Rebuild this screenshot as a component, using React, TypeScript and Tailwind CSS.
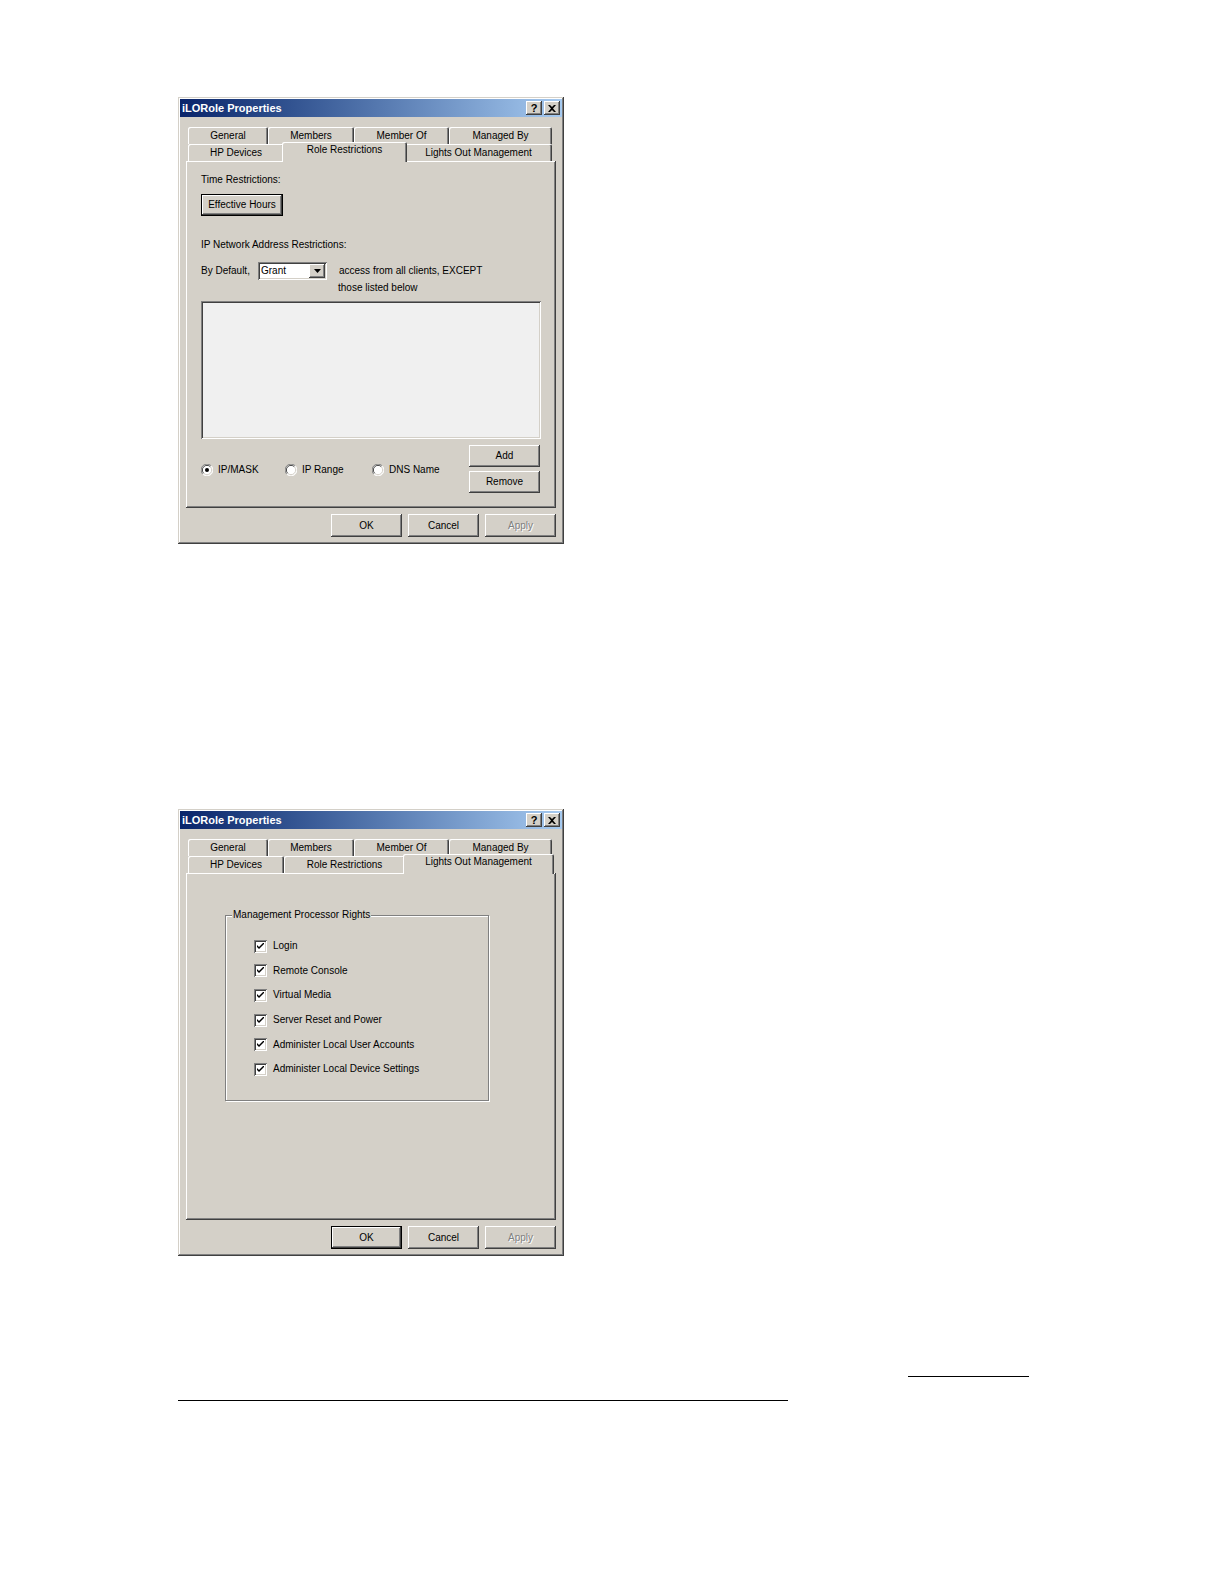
const FACE = "bg-[#d4d0c8]";
const RAISED =
  "shadow-[inset_-1px_-1px_#404040,inset_1px_1px_#ffffff,inset_-2px_-2px_#808080,inset_2px_2px_#d4d0c8]";
const SUNKEN =
  "shadow-[inset_1px_1px_#808080,inset_-1px_-1px_#ffffff,inset_2px_2px_#404040,inset_-2px_-2px_#d4d0c8]";
const FONT = "font-['Liberation_Sans',Arial,sans-serif] text-[10px] leading-[12px] text-black";

function Button({
  label,
  w = 71,
  h = 23,
  isDefault = false,
  disabled = false,
}: {
  label: string;
  w?: number;
  h?: number;
  isDefault?: boolean;
  disabled?: boolean;
}) {
  return (
    <div
      className={`${FACE} flex items-center justify-center ${isDefault ? "border border-black" : ""}`}
      style={{ width: w, height: h }}
    >
      <div className={`${RAISED} flex h-full w-full items-center justify-center`}>
        <span className={disabled ? "text-[#808080] [text-shadow:1px_1px_#ffffff]" : ""}>{label}</span>
      </div>
    </div>
  );
}

function Tab({ label, w, selected = false }: { label: string; w: number; selected?: boolean }) {
  return (
    <div
      className={`${FACE} flex shrink-0 items-start justify-center rounded-t-[2px] shadow-[inset_1px_1px_#ffffff,inset_-1px_0_#404040,inset_-2px_0_#808080] ${
        selected ? "relative z-10 -mx-[2px] -mb-[1px] h-[20px] pt-[2px]" : "h-[17px] pt-[3px]"
      }`}
      style={{ width: selected ? w + 4 : w }}
    >
      {label}
    </div>
  );
}

function Radio({ label, checked = false }: { label: string; checked?: boolean }) {
  return (
    <div className="flex items-center gap-[5px]">
      <svg width="12" height="12" viewBox="0 0 12 12">
        <circle cx="6" cy="6" r="5.5" fill="#ffffff" />
        <path d="M10.2 1.8 A5.5 5.5 0 0 0 1.8 10.2" fill="none" stroke="#808080" strokeWidth="1" />
        <path d="M9.3 2.7 A4.5 4.5 0 0 0 2.7 9.3" fill="none" stroke="#404040" strokeWidth="1" />
        <path d="M1.8 10.2 A5.5 5.5 0 0 0 10.2 1.8" fill="none" stroke="#ffffff" strokeWidth="1" />
        <path d="M2.7 9.3 A4.5 4.5 0 0 0 9.3 2.7" fill="none" stroke="#d4d0c8" strokeWidth="1" />
        {checked && <circle cx="6" cy="6" r="2" fill="#000000" />}
      </svg>
      <span>{label}</span>
    </div>
  );
}

function Checkbox({ label }: { label: string }) {
  return (
    <div className="flex h-[24.6px] items-center gap-[6px]">
      <div
        className={`flex h-[13px] w-[13px] items-center justify-center bg-white shadow-[inset_1px_1px_#808080,inset_-1px_-1px_#ffffff,inset_2px_2px_#404040,inset_-2px_-2px_#d4d0c8]`}
      >
        <svg width="7" height="7" viewBox="0 0 7 7">
          <path d="M0 2 L2 4 L7 -1 L7 1 L2 6 L0 4 Z" fill="#000000" />
        </svg>
      </div>
      <span>{label}</span>
    </div>
  );
}

function TitleBar() {
  return (
    <div className="flex h-[18px] items-center justify-between bg-gradient-to-r from-[#0a246a] to-[#a6caf0] pl-[2px] pr-[2px]">
      <span className="text-[11px] font-bold leading-[12px] text-white">iLORole Properties</span>
      <div className="flex items-center gap-[2px]">
        <div className={`${FACE} ${RAISED} flex h-[14px] w-[16px] items-center justify-center text-[11px] font-bold leading-none`}>
          ?
        </div>
        <div className={`${FACE} ${RAISED} flex h-[14px] w-[16px] items-center justify-center`}>
          <svg width="8" height="7" viewBox="0 0 8 7">
            <path d="M0 0 L2 0 L4 2 L6 0 L8 0 L5 3.5 L8 7 L6 7 L4 5 L2 7 L0 7 L3 3.5 Z" fill="#000000" />
          </svg>
        </div>
      </div>
    </div>
  );
}

function Dialog({ selected, children, okDefault }: { selected: string; children: React.ReactNode; okDefault: boolean }) {
  const row1 = [
    ["General", 80],
    ["Members", 86],
    ["Member Of", 95],
    ["Managed By", 103],
  ] as const;
  const row2 = [
    ["HP Devices", 96],
    ["Role Restrictions", 121],
    ["Lights Out Management", 147],
  ] as const;
  return (
    <div
      className={`${FACE} h-[447px] w-[386px] p-[2px] shadow-[inset_-1px_-1px_#404040,inset_1px_1px_#d4d0c8,inset_-2px_-2px_#808080,inset_2px_2px_#ffffff] ${FONT}`}
    >
      <TitleBar />
      <div className="mt-[10px] flex h-[17px] items-end pl-[8px]">
        {row1.map(([l, w]) => (
          <Tab key={l} label={l} w={w} />
        ))}
      </div>
      <div className="flex h-[17px] items-end pl-[8px]">
        {row2.map(([l, w]) => (
          <Tab key={l} label={l} w={w} selected={l === selected} />
        ))}
      </div>
      <div className={`ml-[6px] h-[347px] w-[370px] ${RAISED}`}>{children}</div>
      <div className="mt-[6px] flex justify-end gap-[6px] pr-[6px]">
        <Button label="OK" isDefault={okDefault} />
        <Button label="Cancel" />
        <Button label="Apply" disabled />
      </div>
    </div>
  );
}

function RoleRestrictions() {
  return (
    <div className="flex flex-col pl-[15px] pt-[13px]">
      <div>Time Restrictions:</div>
      <div className="mt-[8px]">
        <Button label="Effective Hours" w={82} h={22} isDefault />
      </div>
      <div className="mt-[23px]">IP Network Address Restrictions:</div>
      <div className="mt-[11px] flex h-[18px] items-center">
        <span className="w-[57px]">By Default,</span>
        <div className={`flex h-[18px] w-[69px] items-center justify-between bg-white pl-[3px] pr-[2px] ${SUNKEN}`}>
          <span>Grant</span>
          <div className={`${FACE} ${RAISED} flex h-[14px] w-[16px] items-center justify-center`}>
            <svg width="7" height="4" viewBox="0 0 7 4">
              <path d="M0 0 L7 0 L3.5 4 Z" fill="#000000" />
            </svg>
          </div>
        </div>
        <span className="ml-[12px]">access from all clients, EXCEPT</span>
      </div>
      <div className="ml-[137px] mt-[2px]">those listed below</div>
      <div className={`mt-[7px] h-[138px] w-[340px] bg-[#f0f0f0] ${SUNKEN}`} />
      <div className="mt-[6px] flex w-[340px] items-center justify-between pr-[1px]">
        <div className="flex items-center pt-[1px]">
          <div className="w-[84px]">
            <Radio label="IP/MASK" checked />
          </div>
          <div className="w-[87px]">
            <Radio label="IP Range" />
          </div>
          <Radio label="DNS Name" />
        </div>
        <div className="flex flex-col gap-[4px]">
          <Button label="Add" w={71} h={22} />
          <Button label="Remove" w={71} h={22} />
        </div>
      </div>
    </div>
  );
}

function LightsOut() {
  const rights = [
    "Login",
    "Remote Console",
    "Virtual Media",
    "Server Reset and Power",
    "Administer Local User Accounts",
    "Administer Local Device Settings",
  ];
  return (
    <div className="pl-[39px] pt-[42px]">
      <div className="relative h-[186px] w-[264px] border border-[#808080] shadow-[1px_1px_#ffffff,inset_1px_1px_#ffffff]">
        <span className={`absolute -top-[7px] left-[6px] ${FACE} px-[1px]`}>Management Processor Rights</span>
        <div className="flex flex-col pl-[28px] pt-[18px]">
          {rights.map((r) => (
            <Checkbox key={r} label={r} />
          ))}
        </div>
      </div>
    </div>
  );
}

export default function App() {
  return (
    <div className="min-h-[1584px] w-[1224px] bg-white pl-[178px] pt-[97px]">
      <Dialog selected="Role Restrictions" okDefault={false}>
        <RoleRestrictions />
      </Dialog>
      <div className="mt-[265px]">
        <Dialog selected="Lights Out Management" okDefault>
          <LightsOut />
        </Dialog>
      </div>
      <div className="ml-[730px] mt-[120px] h-px w-[121px] bg-black" />
      <div className="mt-[23px] h-px w-[610px] bg-black" />
    </div>
  );
}
